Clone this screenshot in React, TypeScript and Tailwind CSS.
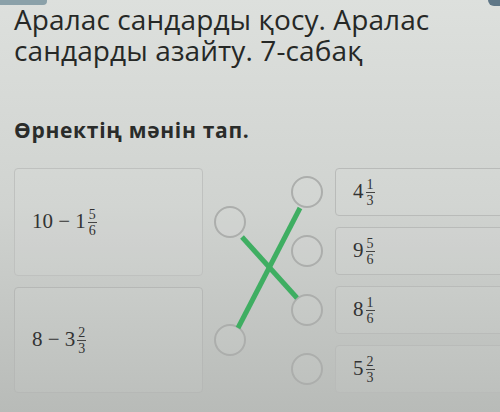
import React from 'react';

type Mixed = { whole: string; num: string; den: string };

const math = { fontFamily: '"Liberation Serif", "DejaVu Serif", serif' };

function Frac({ num, den }: { num: string; den: string }) {
  return (
    <span className="inline-flex flex-col items-center align-middle text-[14px] leading-[13px] ml-[2px]">
      <span>{num}</span>
      <span className="block w-[9px] h-px my-[1px] bg-[#444]" />
      <span>{den}</span>
    </span>
  );
}

function MixedNum({ whole, num, den }: Mixed) {
  return (
    <span className="inline-flex items-center">
      <span>{whole}</span>
      <Frac num={num} den={den} />
    </span>
  );
}

function Dot() {
  return <div className="w-[32px] h-[32px] shrink-0 rounded-full border-2 border-[#acaeac] bg-white/5" />;
}

const answers: Mixed[] = [
  { whole: '4', num: '1', den: '3' },
  { whole: '9', num: '5', den: '6' },
  { whole: '8', num: '1', den: '6' },
  { whole: '5', num: '2', den: '3' },
];

export default function App() {
  return (
    <div
      className="relative w-[500px] h-[412px] overflow-hidden bg-gradient-to-b from-[#dde0dd] via-[#d0d3d0] to-[#b8bbb8] text-[#262826]"
      style={{ fontFamily: '"Open Sans", "Noto Sans", sans-serif' }}
    >
      {/* cropped tabs at the top edge */}
      <div className="absolute left-0 top-0 w-[47px] h-[5px] rounded-br-[4px] bg-[#8ba1a9]" />
      <div className="absolute right-0 top-0 w-[12px] h-[6px] rounded-bl-[6px] bg-[#5f7787]" />

      <div className="pl-[14px] pt-[4px]">
        <h1 className="text-[28px] leading-[31px] tracking-[0.1px]">
          Аралас сандарды қосу. Аралас
          <br />
          сандарды азайту. 7-сабақ
        </h1>
        <p className="mt-[52px] text-[21px] leading-[24px] tracking-[0.7px] font-bold text-[#2a2c2a]">Өрнектің мәнін тап.</p>
      </div>

      <div className="relative mt-[26px] pl-[14px] flex" style={math}>
        <div className="flex flex-col gap-[11px] w-[232px]">
          <div className="flex items-center gap-[11px]">
            <div className="h-[108px] w-[189px] flex items-center pl-[17px] rounded-[4px] border border-[#bfc1bf] bg-white/5 text-[21px] text-[#333]">
              <span>10&nbsp;−&nbsp;</span>
              <MixedNum whole="1" num="5" den="6" />
            </div>
            <Dot />
          </div>
          <div className="flex items-center gap-[11px]">
            <div className="h-[106px] w-[189px] flex items-center pl-[17px] rounded-[4px] border border-[#b6b8b6] bg-white/5 text-[21px] text-[#333]">
              <span>8&nbsp;−&nbsp;</span>
              <MixedNum whole="3" num="2" den="3" />
            </div>
            <Dot />
          </div>
        </div>

        <div className="ml-[45px] flex flex-col gap-[11px]">
          {answers.map((a, i) => (
            <div key={i} className="flex items-center gap-[12px]">
              <Dot />
              <div className="h-[48px] w-[200px] flex items-center pl-[17px] rounded-[4px] border border-[#b9bbb9] bg-white/5 text-[21px] text-[#333]">
                <MixedNum {...a} />
              </div>
            </div>
          ))}
        </div>

        {/* connection lines */}
        <svg className="absolute left-0 top-0 pointer-events-none" width="500" height="230">
          <line x1="242" y1="69" x2="297" y2="130" stroke="#3fae62" strokeWidth="5" />
          <line x1="300" y1="40" x2="238" y2="160" stroke="#3fae62" strokeWidth="5" />
        </svg>
      </div>
    </div>
  );
}
